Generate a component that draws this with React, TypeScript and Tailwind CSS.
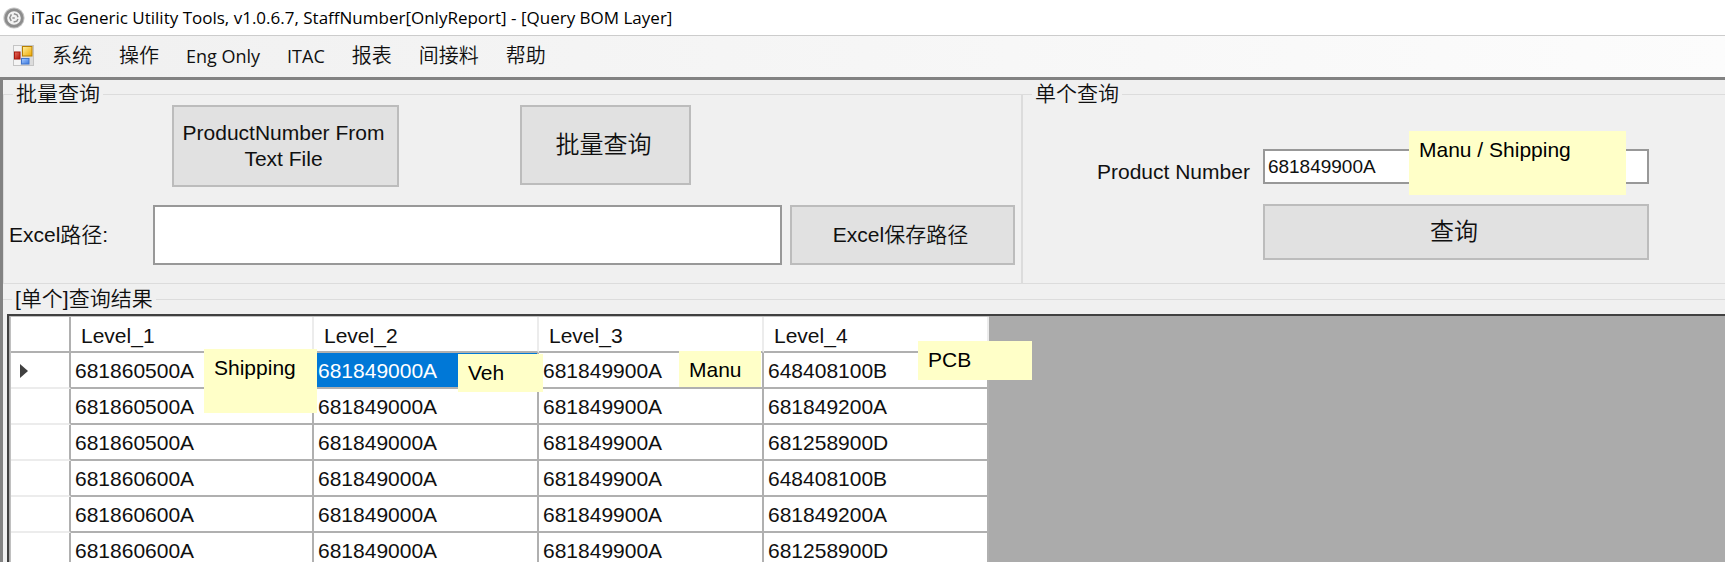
import type { ReactNode } from "react";

const menuItems = ["系统", "操作", "Eng Only", "ITAC", "报表", "间接料", "帮助"];

const isLatin = (text: string) => /^[\x20-\x7e]+$/.test(text);

const columns = ["Level_1", "Level_2", "Level_3", "Level_4"];

const rows = [
  ["681860500A", "681849000A", "681849900A", "648408100B"],
  ["681860500A", "681849000A", "681849900A", "681849200A"],
  ["681860500A", "681849000A", "681849900A", "681258900D"],
  ["681860600A", "681849000A", "681849900A", "648408100B"],
  ["681860600A", "681849000A", "681849900A", "681849200A"],
  ["681860600A", "681849000A", "681849900A", "681258900D"],
];

function AppIcon() {
  return (
    <svg viewBox="0 0 22 22" className="size-[22px] shrink-0" aria-hidden="true">
      <circle cx="11" cy="11" r="10.6" fill="#c4c4c4" />
      <circle cx="11" cy="11" r="8.2" fill="#f2f2f2" stroke="#8c8c8c" strokeWidth="2.8" />
      <g fill="none" stroke="#909090" strokeWidth="1.5">
        <path d="M8.4 7.4 6.8 10.8 8.2 14" />
        <path d="M10.8 6.8 14 7.8 15 10.2" />
        <path d="M10.6 15 13.8 14.2 15 12" />
        <path d="M9.4 11h2.4" />
      </g>
    </svg>
  );
}

function FormIcon() {
  return (
    <svg viewBox="0 0 21 21" className="size-[21px] shrink-0" aria-hidden="true">
      <defs>
        <linearGradient id="gold" x1="0" y1="0" x2="1" y2="1">
          <stop offset="0" stopColor="#fff0a0" />
          <stop offset="1" stopColor="#f0a800" />
        </linearGradient>
        <linearGradient id="red" x1="0" y1="0" x2="1" y2="1">
          <stop offset="0" stopColor="#e87060" />
          <stop offset="1" stopColor="#b01008" />
        </linearGradient>
        <linearGradient id="blue" x1="0" y1="0" x2="1" y2="1">
          <stop offset="0" stopColor="#a8ccff" />
          <stop offset="1" stopColor="#3a78e0" />
        </linearGradient>
      </defs>
      <rect x="0.5" y="0.5" width="20" height="20" fill="#dcdcdc" stroke="#c4c4c4" />
      <rect x="1" y="1" width="7" height="5.5" fill="#f4f4f4" />
      <rect x="1" y="14.5" width="6.5" height="5.5" fill="#f4f4f4" />
      <rect x="1.5" y="7" width="5.5" height="7" fill="url(#red)" stroke="#a8180c" />
      <rect x="9.5" y="1.5" width="9.5" height="9.5" fill="url(#gold)" stroke="#b98000" />
      <rect x="8.5" y="13.5" width="7.5" height="5.5" fill="url(#blue)" stroke="#3f74cc" />
    </svg>
  );
}

function Group({ title, className, children }: { title: string; className: string; children: ReactNode }) {
  return (
    <fieldset className={`min-w-0 border-[#dcdcdc] ${className}`}>
      <legend className="ml-[9px] px-[3px] leading-[22px]">{title}</legend>
      {children}
    </fieldset>
  );
}

function PushButton({ className, children }: { className: string; children: ReactNode }) {
  return (
    <button type="button" className={`border-2 border-[#bcbcbc] bg-[#e1e1e1] pr-1 leading-[26px] ${className}`}>
      {children}
    </button>
  );
}

function Note({ className, children }: { className: string; children: ReactNode }) {
  return <div className={`absolute bg-[#ffffc8] px-[10px] pt-[7px] leading-6 text-black ${className}`}>{children}</div>;
}

export default function App() {
  return (
    <div className="flex h-screen flex-col overflow-hidden bg-[#f0f0f0] font-['Liberation_Sans','Noto_Sans_CJK_SC',sans-serif] text-[21px] font-[350] text-[#101010]">
      <header className="flex h-9 shrink-0 items-center gap-[6px] border-b border-[#cccccc] bg-white pl-[3px] font-['Open_Sans','Noto_Sans_CJK_SC',sans-serif] text-[17px] font-normal text-black">
        <AppIcon />
        <h1>iTac Generic Utility Tools, v1.0.6.7, StaffNumber[OnlyReport] - [Query BOM Layer]</h1>
      </header>

      <nav className="flex h-11 shrink-0 items-center gap-[18px] border-b-[3px] border-[#828282] bg-linear-to-r from-[#f0f0f0] to-[#fcfcfc] pb-[2px] pl-[13px] font-['Open_Sans','Noto_Sans_CJK_SC',sans-serif]">
        <FormIcon />
        <ul className="flex items-baseline gap-[27px]">
          {menuItems.map((item) => (
            <li key={item}>
              <button type="button" className={`leading-7 ${isLatin(item) ? "text-lg font-normal" : "text-xl"}`}>
                {item}
              </button>
            </li>
          ))}
        </ul>
      </nav>

      <main className="flex min-h-0 flex-1 flex-col border-l-[3px] border-[#828282] pt-[3px]">
        <div className="grid shrink-0 grid-cols-[minmax(0,1019px)_minmax(0,1fr)]">
          <Group title="批量查询" className="border">
            <div className="flex gap-[121px] pl-[168px]">
              <PushButton className="h-[82px] w-[227px]">ProductNumber From Text File</PushButton>
              <PushButton className="h-20 w-[171px] text-2xl">批量查询</PushButton>
            </div>
            <div className="flex items-center pt-[18px] pr-[6px] pb-[18px] pl-[5px]">
              <label htmlFor="excel-path" className="w-36 shrink-0">
                Excel路径:
              </label>
              <input
                id="excel-path"
                type="text"
                className="mr-2 h-[60px] min-w-0 flex-1 border-2 border-[#989898] bg-white px-1"
              />
              <PushButton className="h-[60px] w-[225px] shrink-0">Excel保存路径</PushButton>
            </div>
          </Group>

          <Group title="单个查询" className="border border-r-0">
            <div className="grid grid-cols-[auto_minmax(0,1fr)] items-end gap-x-[13px] gap-y-5 pt-11 pr-[76px] pl-[74px]">
              <label htmlFor="product-number" className="leading-[25px]">
                Product Number
              </label>
              <div className="relative">
                <input
                  id="product-number"
                  type="text"
                  defaultValue="681849900A"
                  className="block h-[35px] w-full border-2 border-[#989898] bg-white px-[3px] text-[19px]"
                />
                <Note className="-top-[18px] right-[23px] h-16 w-[217px]">Manu / Shipping</Note>
              </div>
              <PushButton className="col-start-2 h-14 text-2xl">查询</PushButton>
            </div>
          </Group>
        </div>

        <Group title="[单个]查询结果" className="mt-[4px] flex-1 border-t">
          <div className="relative mt-[4px] ml-[4px] h-[600px] border-t-2 border-l-2 border-[#404040] bg-[#ababab] pl-px">
            <table className="w-[978px] table-fixed border-separate border-spacing-0 border-t border-l border-[#c0c0c0] bg-white text-left">
              <colgroup>
                <col className="w-[60px]" />
                <col className="w-[243px]" />
                <col className="w-[225px]" />
                <col className="w-[225px]" />
                <col className="w-[225px]" />
              </colgroup>
              <thead>
                <tr className="h-9">
                  <th className="border-r-2 border-b-2 border-[#b0b0b0] p-0" aria-label="Row" />
                  {columns.map((column) => (
                    <th
                      key={column}
                      className="border-r-2 border-b-2 border-r-[#ececec] border-b-[#b0b0b0] pt-[3px] pr-0 pb-0 pl-[10px] leading-7 font-normal"
                    >
                      {column}
                    </th>
                  ))}
                </tr>
              </thead>
              <tbody>
                {rows.map((row, rowIndex) => (
                  <tr key={rowIndex} className="h-9">
                    <th className="border-r-2 border-b-2 border-r-[#b0b0b0] border-b-[#ececec] py-0 pr-0 pl-[9px]" aria-label={`Row ${rowIndex + 1}`}>
                      {rowIndex === 0 && (
                        <svg viewBox="0 0 8 14" className="mt-[2px] h-[14px] w-2" aria-hidden="true">
                          <path d="M0 0 8 7 0 14Z" fill="#404040" />
                        </svg>
                      )}
                    </th>
                    {row.map((value, columnIndex) => (
                      <td
                        key={columnIndex}
                        className={`border-r-2 border-b-2 border-[#b0b0b0] pt-[2px] pr-0 pb-0 pl-1 leading-7 ${
                          rowIndex === 0 && columnIndex === 1 ? "bg-[#0078d7] text-white" : ""
                        }`}
                      >
                        {value}
                      </td>
                    ))}
                  </tr>
                ))}
              </tbody>
            </table>
            <Note className="top-[33px] left-[195px] h-16 w-[113px]">Shipping</Note>
            <Note className="top-[38px] left-[449px] h-[38px] w-[85px]">Veh</Note>
            <Note className="top-[35px] left-[670px] h-9 w-[82px]">Manu</Note>
            <Note className="top-[25px] left-[909px] h-[39px] w-[114px]">PCB</Note>
          </div>
        </Group>
      </main>
    </div>
  );
}
